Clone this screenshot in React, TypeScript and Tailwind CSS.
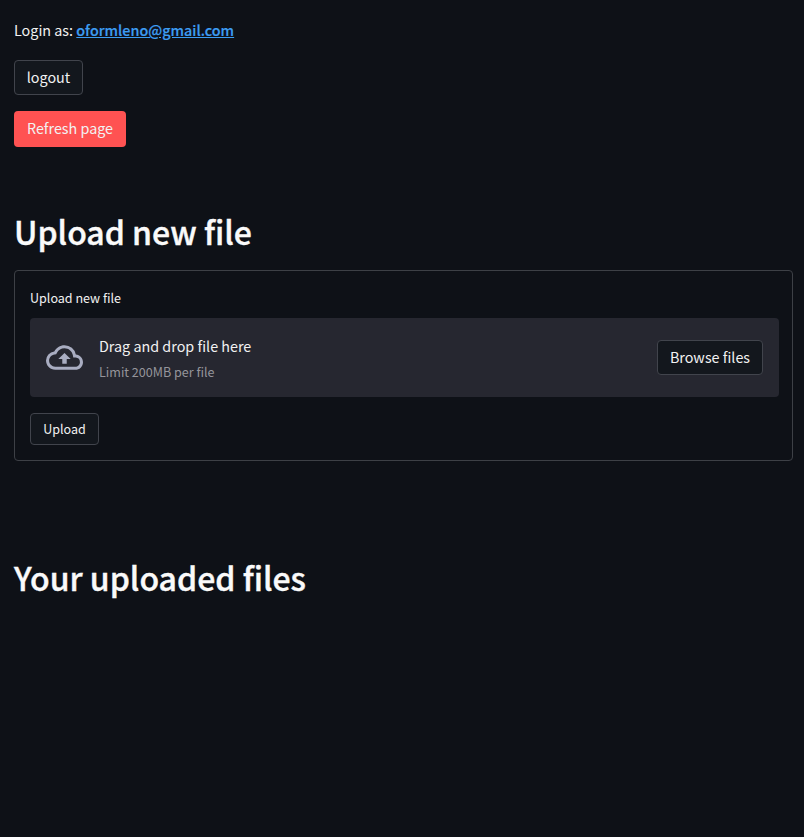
export default function App() {
  return (
    <div className="flex min-h-[837px] w-full flex-col items-start bg-[#0e1117] px-[14px] pt-[18px] pr-[11px] font-['Noto_Sans_CJK_SC','Noto_Sans_CJK_JP',sans-serif] text-[14.35px] text-[#f2f2f2]">
      <p className="h-6 leading-6 whitespace-nowrap">
        Login as:{" "}
        <a href="#" className="font-['Noto_Sans_CJK_SC_Medium','Noto_Sans_CJK_SC'] font-medium text-[#3d9df3] underline [-webkit-text-stroke:0.2px_#3d9df3]">oformleno@gmail.com</a>
      </p>
      <button className="mt-[18px] h-[35px] w-[69px] rounded border border-[#41444c] bg-[#13171d] pb-[2px] whitespace-nowrap">logout</button>
      <button className="mt-4 h-9 w-28 rounded bg-[#ff5252] pb-[2px] whitespace-nowrap">Refresh page</button>
      <h1 className="mt-[62px] h-[44px] font-['Noto_Sans_CJK_SC_Medium','Noto_Sans_CJK_SC'] text-[32px] leading-[44px] font-medium whitespace-nowrap text-[#fafafa] [-webkit-text-stroke:0.4px_#fafafa]">Upload new file</h1>
      <form className="mt-[17px] flex h-[191px] w-full flex-col items-start rounded border border-[#3d4046] pr-[13px] pl-[15px] pt-[17px]">
        <label className="h-5 text-[12.55px] leading-5">Upload new file</label>
        <section className="mt-[10px] flex h-[79px] w-full items-center rounded bg-[#262730] pr-4 pl-4">
          <svg viewBox="0 0 24 24" className="h-[37px] w-[37px] fill-[#a9adc1]">
            <path d="M19.35 10.04A7.49 7.49 0 0 0 12 4C9.11 4 6.6 5.64 5.35 8.04A5.994 5.994 0 0 0 0 14c0 3.31 2.69 6 6 6h13c2.76 0 5-2.24 5-5 0-2.64-2.05-4.78-4.65-4.96zM19 18H6c-2.21 0-4-1.79-4-4 0-2.05 1.53-3.76 3.56-3.97l1.07-.11.5-.95A5.469 5.469 0 0 1 12 6c2.62 0 4.88 1.86 5.39 4.43l.3 1.5 1.53.11A2.98 2.98 0 0 1 22 15c0 1.65-1.35 3-3 3zM8 13h2.55v3h2.9v-3H16l-4-4z" />
          </svg>
          <div className="ml-4 flex grow flex-col">
            <span className="h-7 leading-[26px]">Drag and drop file here</span>
            <span className="h-[22px] text-[12.55px] leading-[22px] text-[#95959b]">Limit 200MB per file</span>
          </div>
          <button type="button" className="h-[35px] w-[106px] rounded border border-[#41444c] bg-[#13171d] pb-[2px] whitespace-nowrap">Browse files</button>
        </section>
        <button type="button" className="mt-4 h-8 w-[69px] rounded border border-[#41444c] bg-[#13171d] text-[12.55px]">Upload</button>
      </form>
      <h1 className="mt-[94px] h-[44px] font-['Noto_Sans_CJK_SC_Medium','Noto_Sans_CJK_SC'] text-[32px] leading-[44px] font-medium whitespace-nowrap text-[#fafafa] [-webkit-text-stroke:0.4px_#fafafa]">Your uploaded files</h1>
    </div>
  );
}
